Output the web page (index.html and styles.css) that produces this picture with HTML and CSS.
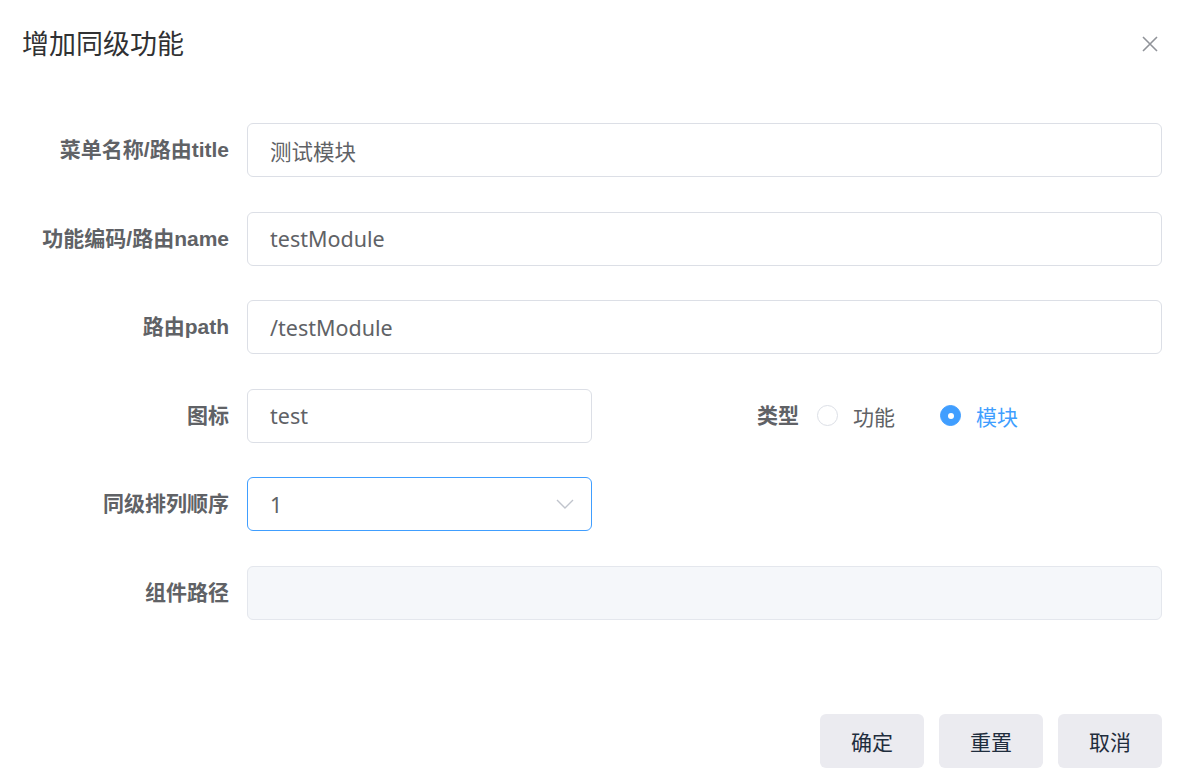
FILE: index.html
```html
<!DOCTYPE html>
<html lang="zh-CN">
<head>
    <meta charset="UTF-8">
    <title>增加同级功能</title>
    <link rel="stylesheet" href="styles.css">
</head>
<body>

    <div class="dialog">
        <div class="dialog-header">
            <span class="dialog-title">增加同级功能</span>
            <svg class="close" width="16" height="16" viewBox="0 0 16 16">
                <path d="M1 1 L15 15 M15 1 L1 15" stroke="#909399" stroke-width="1.6" fill="none"/>
            </svg>
        </div>

        <div class="form">
            <div class="form-item">
                <label class="form-label">菜单名称/路由title</label>
                <div class="input">测试模块</div>
            </div>
            <div class="form-item">
                <label class="form-label">功能编码/路由name</label>
                <div class="input">testModule</div>
            </div>
            <div class="form-item">
                <label class="form-label">路由path</label>
                <div class="input">/testModule</div>
            </div>
            <div class="form-row">
                <div class="form-item">
                    <label class="form-label">图标</label>
                    <div class="input">test</div>
                </div>
                <div class="form-item">
                    <label class="form-label">类型</label>
                    <div class="radio-group">
                        <span class="radio"><span class="radio-dot"></span>功能</span>
                        <span class="radio checked"><span class="radio-dot"></span>模块</span>
                    </div>
                </div>
            </div>
            <div class="form-row">
                <div class="form-item">
                    <label class="form-label">同级排列顺序</label>
                    <div class="input select">
                        <span>1</span>
                        <svg width="18" height="10" viewBox="0 0 18 10">
                            <path d="M1 1 L9 9 L17 1" stroke="#c0c4cc" stroke-width="1.4" fill="none"/>
                        </svg>
                    </div>
                </div>
            </div>
            <div class="form-item">
                <label class="form-label">组件路径</label>
                <div class="input disabled"></div>
            </div>
        </div>

        <div class="dialog-footer">
            <button class="btn">确定</button>
            <button class="btn">重置</button>
            <button class="btn">取消</button>
        </div>
    </div>

</body>
</html>
```

FILE: styles.css
```css
body {
    font-family: "Noto Sans", "Noto Sans CJK SC", sans-serif;
    background: #fff;
    margin: 0;
    color: #606266;
}
.dialog {
    width: 1180px;
}
.dialog-header {
    display: flex;
    align-items: center;
    justify-content: space-between;
    height: 36px;
    padding: 26px 22px 0 22px;
}
.dialog-title {
    font-size: 27px;
    line-height: 36px;
    color: #303133;
}
.form {
    display: flex;
    flex-direction: column;
    gap: 34.6px;
    margin-top: 61px;
    padding: 0 18px 0 22px;
}
.form-row {
    display: grid;
    grid-template-columns: 1fr 1fr;
}
.form-item {
    display: flex;
    align-items: center;
    height: 54px;
}
.form-label {
    width: 225px;
    flex: none;
    box-sizing: border-box;
    padding: 0 18px 4px 0;
    text-align: right;
    font-family: "Liberation Sans", "Noto Sans CJK SC", sans-serif;
    font-size: 21px;
    font-weight: bold;
    color: #606266;
}
.input {
    flex: 1;
    height: 54px;
    box-sizing: border-box;
    border: 1px solid #dcdfe6;
    border-radius: 6px;
    padding: 0 22px;
    display: flex;
    align-items: center;
    font-size: 21.5px;
    color: #606266;
}
.select {
    justify-content: space-between;
    border-color: #409eff;
    padding-right: 17px;
}
.disabled {
    background: #f5f7fa;
    border-color: #e4e7ed;
}
.radio-group {
    display: flex;
    align-items: center;
}
.radio {
    display: flex;
    align-items: center;
    font-size: 21px;
    color: #606266;
    margin-right: 45px;
}
.radio-dot {
    width: 21px;
    height: 21px;
    box-sizing: border-box;
    border: 1px solid #dcdfe6;
    border-radius: 50%;
    margin-right: 15px;
    position: relative;
}
.radio.checked {
    color: #409eff;
}
.radio.checked .radio-dot {
    background: #409eff;
    border-color: #409eff;
}
.radio.checked .radio-dot::after {
    content: "";
    position: absolute;
    left: 50%;
    top: 50%;
    width: 6px;
    height: 6px;
    margin: -3px 0 0 -3px;
    border-radius: 50%;
    background: #fff;
}
.dialog-footer {
    display: flex;
    justify-content: flex-end;
    gap: 15px;
    margin-top: 94px;
    padding-right: 18px;
}
.btn {
    width: 104px;
    height: 54px;
    border: none;
    border-radius: 6px;
    background: #ebebf0;
    color: #1f2d3d;
    font-family: "Noto Sans", "Noto Sans CJK SC", sans-serif;
    font-size: 21px;
    cursor: pointer;
}
```
